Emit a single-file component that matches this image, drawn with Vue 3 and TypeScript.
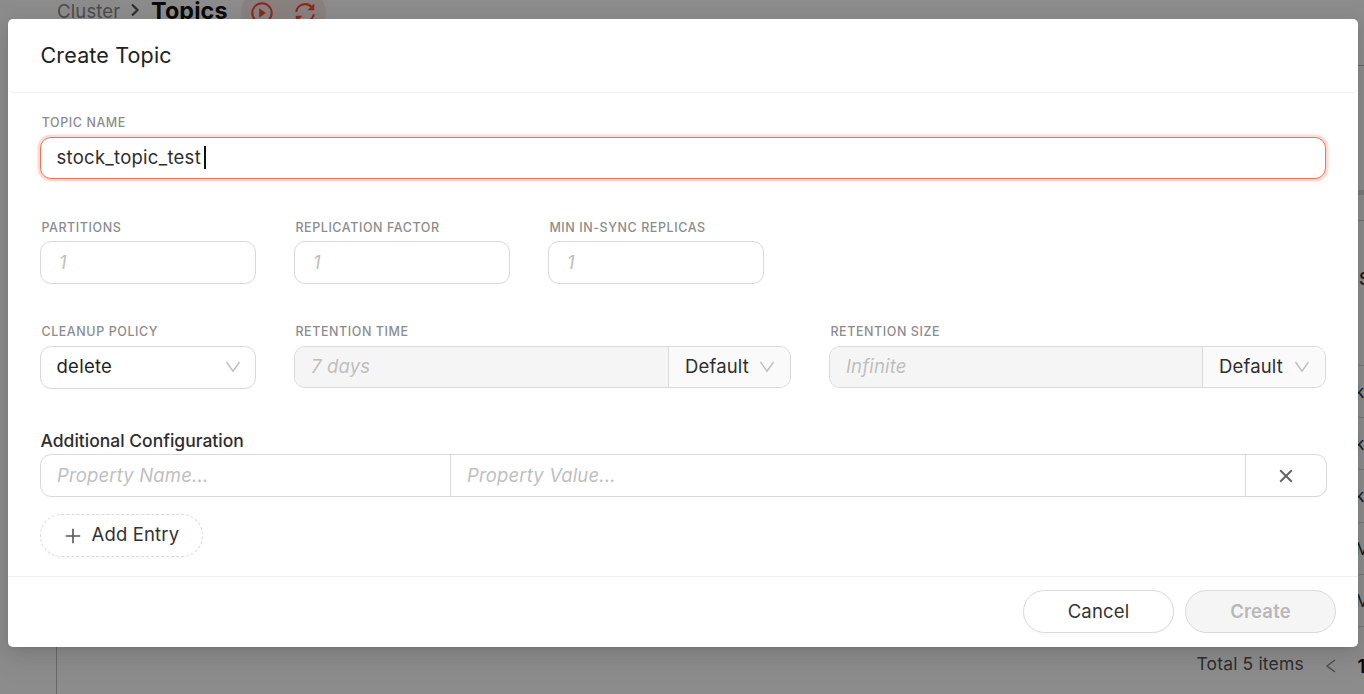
<script setup lang="ts">
import { ref } from 'vue'

interface Field { label: string; placeholder: string }

const topicName = ref('stock_topic_test')
const counts: Field[] = [
  { label: 'PARTITIONS', placeholder: '1' },
  { label: 'REPLICATION FACTOR', placeholder: '1' },
  { label: 'MIN IN-SYNC REPLICAS', placeholder: '1' },
]
const retention: Field[] = [
  { label: 'RETENTION TIME', placeholder: '7 days' },
  { label: 'RETENTION SIZE', placeholder: 'Infinite' },
]
const cells: string[] = ['k', 'k', 'k', 'M', 'M']
</script>

<template>
  <div class="page">
    <div class="backdrop">
      <aside class="sidebar"></aside>
      <main class="main">
        <header class="crumbs">
          <span class="crumb">Cluster</span>
          <svg class="sep" width="10" height="14" viewBox="0 0 10 14"><path d="M2 1.5 7.5 7 2 12.5" /></svg>
          <span class="current">Topics</span>
          <span class="tools">
            <svg width="22" height="22" viewBox="0 0 22 22">
              <circle cx="11" cy="11" r="9.7" /><path class="solid" d="M8.2 6.2 14.9 11 8.2 15.8Z" />
            </svg>
            <svg width="22" height="22" viewBox="0 0 22 22">
              <path d="M2.2 9.8A9 9 0 0 1 17.8 5.2M19.8 12.2A9 9 0 0 1 4.2 16.8" />
              <path class="solid" d="M20.3 1.4v6.8h-6.8ZM1.7 20.6v-6.8h6.8Z" />
            </svg>
          </span>
        </header>
        <div class="right">
          <section class="card"></section>
          <section class="table">
            <div class="tr th">S</div>
            <div v-for="(c, i) in cells" :key="i" class="tr">{{ c }}</div>
          </section>
        </div>
        <footer class="pager">
          <span class="total">Total 5 items</span>
          <svg width="10" height="14" viewBox="0 0 10 14"><path d="M9 1 1 7l8 6" /></svg>
          <b>1</b>
        </footer>
      </main>
    </div>
    <div class="mask"></div>

    <div class="modal">
      <div class="head">Create Topic</div>
      <div class="body">
        <label class="label">TOPIC NAME</label>
        <div class="box focus"><span>{{ topicName }}</span><i class="caret"></i></div>

        <div class="row counts">
          <div v-for="f in counts" :key="f.label" class="narrow">
            <label class="label">{{ f.label }}</label>
            <input class="box num" :placeholder="f.placeholder" />
          </div>
        </div>

        <div class="row policies">
          <div class="narrow">
            <label class="label">CLEANUP POLICY</label>
            <div class="box select">
              <span>delete</span>
              <svg width="16" height="14" viewBox="0 0 16 14"><path d="M1.5 2 8 11.2 14.5 2" /></svg>
            </div>
          </div>
          <div v-for="f in retention" :key="f.label" class="wide">
            <label class="label">{{ f.label }}</label>
            <div class="group">
              <input class="disabled" disabled :placeholder="f.placeholder" />
              <div class="addon">
                <span>Default</span>
                <svg width="16" height="14" viewBox="0 0 16 14"><path d="M1.5 2 8 11.2 14.5 2" /></svg>
              </div>
            </div>
          </div>
        </div>

        <h4 class="title">Additional Configuration</h4>
        <div class="entry">
          <input class="key" placeholder="Property Name..." />
          <input class="value" placeholder="Property Value..." />
          <button class="remove" type="button">
            <svg width="14" height="14" viewBox="0 0 14 14"><path d="M1.2 1.2l11.6 11.6M12.8 1.2 1.2 12.8" /></svg>
          </button>
        </div>
        <button class="add" type="button">
          <svg width="16" height="16" viewBox="0 0 16 16"><path d="M8 .8v14.4M.8 8h14.4" /></svg>
          <span>Add Entry</span>
        </button>
      </div>
      <div class="foot">
        <button class="btn" type="button">Cancel</button>
        <button class="btn off" type="button" disabled>Create</button>
      </div>
    </div>
  </div>
</template>

<style>
body { margin: 0; overflow: hidden; }
</style>

<style scoped>
* { box-sizing: border-box; }
.page {
  position: relative; width: 1364px; height: 694px; overflow: hidden; background: #fff;
  font: 400 18.5px/28px Inter, "Liberation Sans", sans-serif; letter-spacing: .15px; color: #2e2e2e;
}
button, input { font: inherit; letter-spacing: inherit; color: inherit; margin: 0; outline: none; }
svg { fill: none; stroke: currentColor; flex: none; display: block; }
.backdrop { display: flex; height: 694px; }
.sidebar { width: 57px; flex: none; border-right: 1px solid #bdbdbd; margin-top: 40px; }
.main { flex: 1; min-width: 0; display: flex; flex-direction: column; }
.crumbs { height: 65px; display: flex; align-items: flex-start; white-space: nowrap; }
.crumb { color: #8a8a8a; margin-top: -3px; width: 64px; }
.sep { margin: 3px 0 0 9px; stroke: #555; stroke-width: 2.2; }
.current { font-size: 23.3px; font-weight: 700; color: #151515; margin: -3px 0 0 11px; width: 77px; }
.tools {
  display: flex; gap: 21px; align-items: center; color: #ff4b2e; background: #faebe7;
  border-radius: 22px; height: 43px; padding: 0 10px; margin: -9px 0 0 13px;
}
.tools svg { stroke-width: 2; }
.tools .solid { fill: currentColor; stroke: none; }
.right { align-self: flex-end; width: 6px; height: 562px; }
.card { height: 130px; border: 1px solid #cfcfcf; border-top-color: #bbb; border-width: 1px 0; border-bottom: 5px solid #dedede; }
.table { margin-top: 25px; border-top: 1px solid #d0d0d0; }
.tr {
  height: 52.2px; display: flex; align-items: center; padding-top: 1px; text-indent: -3px;
  border-bottom: 1px solid #d9d9d9; font-size: 17px; white-space: nowrap; overflow: hidden;
}
.th { height: 145px; padding-bottom: 30px; font-weight: 500; text-indent: 1px; }
.pager { display: flex; align-items: center; height: 28px; margin: 23px 0 0 1139.5px; white-space: nowrap; color: #555; }
.total { width: 107px; font-size: 17.5px; }
.pager svg { margin: 4px 22px 0; stroke: #8b8b8b; stroke-width: 1.4; }
.pager b { color: #111; font-weight: 600; padding-top: 4px; }
.mask { position: absolute; inset: 0; background: rgba(0, 0, 0, .45); }

.modal {
  position: absolute; left: 8px; top: 19px; width: 1350px; height: 628px; background: #fff; border-radius: 5px;
  display: flex; flex-direction: column;
  box-shadow: 0 3px 6px -4px rgba(0,0,0,.12), 0 6px 16px rgba(0,0,0,.08), 0 9px 28px 8px rgba(0,0,0,.05);
}
.head { height: 74px; flex: none; border-bottom: 1px solid #f0f0f0; border-radius: 5px; padding: 22px 32.5px 0; font-size: 21.5px; color: #222; }
.body { flex: 1; padding: 20px 32px 0; }
.label { display: block; height: 24px; padding-left: 1.7px; font-size: 12.5px; line-height: 19px; font-weight: 550; letter-spacing: .57px; color: #8c8c8c; white-space: nowrap; }
.box { display: flex; align-items: center; width: 100%; height: 43px; border: 1px solid #d9d9d9; border-radius: 11px; padding: 0 16px 2px; background: #fff; }
.focus { width: 1286px; height: 42px; border-color: #f07355; box-shadow: 0 0 0 2.6px #fddcd6; padding: 0 15.5px 2px; letter-spacing: .27px; }
.caret { width: 2px; height: 23px; background: #111; margin-left: 3px; }
.num { padding-left: 18px; }
::placeholder { color: #bfbfbf; font-style: italic; opacity: 1; }
.row { display: flex; gap: 38px; }
.row .label { height: 23px; padding-left: 1.4px; }
.counts { margin-top: 39px; }
.policies { margin-top: 38px; }
.policies .label { height: 24px; }
.narrow { width: 216px; flex: none; }
.wide { width: 497px; flex: none; }
.select { justify-content: space-between; padding: 0 14px 3px 15.5px; color: #1f1f1f; letter-spacing: .27px; }
.select svg, .addon svg { stroke: #bfbfbf; stroke-width: 1.4; margin-top: 2px; }
.group { display: flex; height: 42px; border: 1px solid #d9d9d9; border-radius: 11px; overflow: hidden; }
.disabled { flex: 1; min-width: 0; border: 0; background: #f5f5f5; padding: 0 16px 3px; }
.addon { width: 122px; display: flex; align-items: center; justify-content: space-between; border-left: 1px solid #d9d9d9; background: #fafafa; padding: 0 15px 2px 16px; }
.wide:last-child .addon { width: 123px; }
.title { margin: 38px 0 0 .5px; height: 27px; font-size: 17.5px; line-height: 27px; font-weight: 500; letter-spacing: 0; white-space: nowrap; }
.entry { width: 1287px; height: 43px; display: flex; border: 1px solid #d9d9d9; border-radius: 11px; }
.entry input { border: 0; border-right: 1px solid #d9d9d9; background: transparent; min-width: 0; padding: 0 16px 1px; }
.key { width: 410px; }
.value { flex: 1; }
.remove { width: 80px; border: 0; background: transparent; color: #666; display: flex; align-items: center; justify-content: center; border-radius: 0 11px 11px 0; box-shadow: 0 2px 0 rgba(0,0,0,.015); padding: 0; }
.remove svg { stroke-width: 2; }
.add { margin-top: 17px; width: 163px; height: 43px; display: flex; align-items: center; border: 1px dashed #d9d9d9; border-radius: 22px; background: #fff; padding: 0 0 3px 24px; gap: 10.5px; color: #333; box-shadow: 0 2px 0 rgba(0,0,0,.015); white-space: nowrap; }
.add svg { margin-top: 4px; stroke: #555; stroke-width: 1.6; }
.foot { height: 71px; flex: none; border-top: 1px solid #f0f0f0; display: flex; justify-content: flex-end; gap: 11px; padding: 13px 22px 0; }
.btn { width: 151px; height: 43px; border: 1px solid #d9d9d9; border-radius: 22px; background: #fff; padding: 0 0 2px; color: #333; box-shadow: 0 2px 0 rgba(0,0,0,.015); }
.off { background: #f5f5f5; color: #b8b8b8; font-weight: 600; box-shadow: none; }
</style>
